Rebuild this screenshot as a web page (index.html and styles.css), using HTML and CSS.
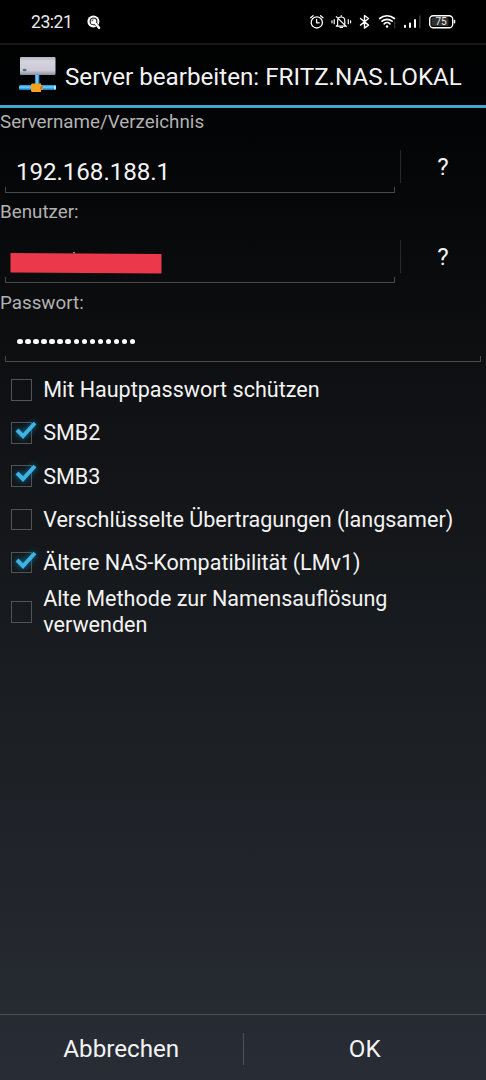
FILE: index.html
```html
<!DOCTYPE html>
<html lang="de">
<head>
<meta charset="utf-8">
<title>Server bearbeiten</title>
<link rel="stylesheet" href="styles.css">
</head>
<body>
<div class="screen">
  <header class="status">
    <span class="clock">23:21</span>
    <svg class="search" width="14" height="15" viewBox="0 0 14 15"><circle cx="6.4" cy="6.6" r="6" fill="#fff"/><circle cx="6.5" cy="6.4" r="3.4" fill="none" stroke="#111" stroke-width="1.1"/><path d="M4.9 6.3a1.7 1.7 0 0 1 1.5-1.6" stroke="#111" fill="none"/><path d="M9 9l3 4" stroke="#111" stroke-width="3"/><path d="M9 9l3.2 4" stroke="#fff" stroke-width="2.2" stroke-linecap="round"/></svg>
    <svg class="indicators" width="146" height="20" viewBox="310 12 146 20" fill="none" stroke="#fff" stroke-width="1.3" stroke-linecap="round" stroke-linejoin="round">
      <circle cx="316.8" cy="22.4" r="5.6"/><path d="M316.6 19.4v3.4h2.6M310.6 17.7l2.4-2M323 17.7l-2.4-2"/>
      <path d="M337.6 24.8v-4.1c0-2.2 1.4-3.7 3.6-3.7s3.6 1.5 3.6 3.7v4.1l1.3 1.4h-9.8zM341.2 15.5v1M340 27.5h2.5M336.3 16.7l10 10M334.2 19.7v4M332 20.8v2M348.3 19.7v4M350.6 20.8v2" stroke-width="1.2"/>
      <path d="M360.5 18.5l8 6.6-4 3V15.5l4 3-8 6.6" stroke-width="1.4"/>
      <path d="M379.7 18.5c4.2-3.7 10.5-3.7 14.7 0M382 21.2c2.8-2.5 7.3-2.5 10.1 0M384.2 23.8c1.6-1.5 4.2-1.5 5.7 0" stroke-width="1.7"/><circle cx="387" cy="26.5" r="1.2" fill="#fff" stroke="none"/>
      <path d="M394.7 22v2m0 1.5v2" stroke="#333" stroke-width="1.5"/>
      <path d="M405 25.7v1.3M410 23.5v3.5M415 20v7" stroke-width="2"/><path d="M419.8 16v11.5" stroke="#333" stroke-width="1.7"/>
      <rect x="429.7" y="15.7" width="23" height="12" rx="3.5" stroke-width="1.4"/><rect x="431.5" y="17.5" width="17" height="8.4" rx="1.5" fill="#303030" stroke="none"/><path d="M454.5 20.5v2.2" stroke-width="1.5"/>
      <text class="battery" x="441" y="25.3" text-anchor="middle">75</text>
    </svg>
  </header>
  <div class="title">
    <svg width="38" height="37" viewBox="0 0 38 37">
      <defs>
        <linearGradient id="box" x2="0" y2="1"><stop stop-color="#b5b3c1"/><stop offset=".25" stop-color="#d5d3de"/><stop offset=".75" stop-color="#cbc9d5"/><stop offset="1" stop-color="#8f8c9f"/></linearGradient>
        <linearGradient id="cable" x2="0" y2="1"><stop stop-color="#168bd2"/><stop offset=".4" stop-color="#72d4ff"/><stop offset="1" stop-color="#0874ba"/></linearGradient>
        <linearGradient id="stem"><stop stop-color="#168bd2"/><stop offset=".45" stop-color="#8bd9ff"/><stop offset="1" stop-color="#0874ba"/></linearGradient>
      </defs>
      <rect x="16" y="18" width="4.5" height="11" fill="url(#stem)"/>
      <rect x="1" y="1" width="35.5" height="18" rx="1" fill="url(#box)"/><ellipse cx="5.6" cy="14" rx="2" ry="1.2" fill="#38836b"/>
      <rect x="0" y="29" width="37" height="5" rx="1.5" fill="url(#cable)"/><ellipse cx="36" cy="31.5" rx="1" ry="2.3" fill="#b7e9ff"/>
      <path d="M13 27.5h9v2h2v4.5h-2v2h-9l-1-1v-6.5z" fill="#f4a321"/><path d="M21 30h3v3.5h-3z" fill="#c98330"/>
    </svg>
    <span>Server bearbeiten: FRITZ.NAS.LOKAL</span>
  </div>
  <main class="form">
    <label class="caption">Servername/Verzeichnis</label>
    <div class="row"><div class="field">192.168.188.1</div><button class="help">?</button></div>
    <label class="caption">Benutzer:</label>
    <div class="row"><div class="field"><svg class="redacted" width="152" height="22" viewBox="0 0 152 22"><path d="M.5 1l151 1v19.5L.5 20.5z" fill="#eb384a"/><path d="M63 .7h2" stroke="#aaa"/></svg></div><button class="help">?</button></div>
    <label class="caption">Passwort:</label>
    <div class="row short"><div class="field"><span class="dots"><i></i><i></i><i></i><i></i><i></i><i></i><i></i><i></i><i></i><i></i><i></i><i></i><i></i><i></i><i></i></span></div></div>
    <div class="options">
      <div class="option"><span class="box"></span><span>Mit Hauptpasswort schützen</span></div>
      <div class="option"><span class="box"><svg class="tick" viewBox="0 0 24 20"><path d="M3 10l6 6L21 3"/></svg></span><span>SMB2</span></div>
      <div class="option"><span class="box"><svg class="tick" viewBox="0 0 24 20"><path d="M3 10l6 6L21 3"/></svg></span><span>SMB3</span></div>
      <div class="option"><span class="box"></span><span>Verschlüsselte Übertragungen (langsamer)</span></div>
      <div class="option"><span class="box"><svg class="tick" viewBox="0 0 24 20"><path d="M3 10l6 6L21 3"/></svg></span><span>Ältere NAS-Kompatibilität (LMv1)</span></div>
      <div class="option tall"><span class="box"></span><span>Alte Methode zur Namensauflösung verwenden</span></div>
    </div>
  </main>
  <footer class="actions"><button>Abbrechen</button><button>OK</button></footer>
</div>
</body>
</html>
```
FILE: styles.css
```css
* { box-sizing: border-box; }
body { margin: 0; background: #000; }
button { background: none; border: 0; padding: 0; color: inherit; font: inherit; }
.screen {
  width: 486px; height: 1080px; display: flex; flex-direction: column; overflow: hidden;
  font-family: Roboto, sans-serif; font-size: 24.2px; color: #f3f3f3;
  background: linear-gradient(#000 0, #020304 108px, #111316 440px, #1a1d21 680px, #272b33 1040px, #282c34);
}
.status { height: 43px; flex: none; background: #000; display: flex; align-items: center; padding: 0 30px 0 31px; }
.clock { width: 41px; font-size: 17.6px; letter-spacing: -.5px; color: #e8e8e8; }
.search { margin-left: 15px; margin-top: 1px; }
.indicators { margin-left: auto; }
.battery { font: 10px Roboto, sans-serif; fill: #eee; stroke: none; }
.title { height: 65px; flex: none; border-top: 2px solid #171717; border-bottom: 3px solid #43a6cd; display: flex; align-items: center; padding-left: 19px; gap: 8px; white-space: nowrap; }
.title svg { margin-top: -1px; }
.title span { padding-top: 3px; }
.form { flex: 1; }
.caption { display: block; height: 26px; line-height: 28px; font-size: 18.8px; color: #b2b2b2; }
.row { height: 64.4px; display: flex; align-items: flex-start; padding: 15px 0 0 5px; }
.field { height: 44px; width: 390px; padding-left: 11px; display: flex; align-items: center; padding-top: 3px; border-bottom: 1.5px solid #48494b; letter-spacing: -.08px;
  background: linear-gradient(#48494b, #48494b) left bottom / 1px 5px no-repeat, linear-gradient(#48494b, #48494b) right bottom / 1px 5px no-repeat; }
.help { width: 85px; height: 33px; margin-left: 5px; margin-top: 1px; border-left: 1px solid #27282a; text-align: center; color: #f3f3f3; }
.redacted { margin-left: -6px; margin-top: 2px; flex: none; }
.short { height: 52px; padding-top: 3px; }
.short .field { width: 476px; }
.dots { display: flex; gap: 2.65px; margin-left: 1.3px; margin-top: 1px; }
.dots i { width: 5.4px; height: 5.4px; border-radius: 50%; background: #fff; }
.options { padding-top: 1.5px; font-size: 21.55px; line-height: 25.3px; }
.option { height: 43.2px; display: flex; align-items: center; padding-left: 10.6px; gap: 11px; }
.tall { height: 55px; padding-right: 40px; }
.box { position: relative; width: 21.6px; height: 21.6px; flex: none; border: 1px solid #505357; }
.tick { position: absolute; left: 2px; top: -3px; width: 24px; height: 20px; overflow: visible; fill: none; stroke: #3eb2e2; stroke-width: 4; filter: drop-shadow(0 0 3px #087eae); }
.actions { height: 66px; flex: none; border-top: 1.5px solid #4b4f56; display: flex; align-items: center; padding-top: 2px; }
.actions button { flex: 1; height: 32px; text-align: center; }
.actions button + button { border-left: 1px solid #4b4f56; }
```
